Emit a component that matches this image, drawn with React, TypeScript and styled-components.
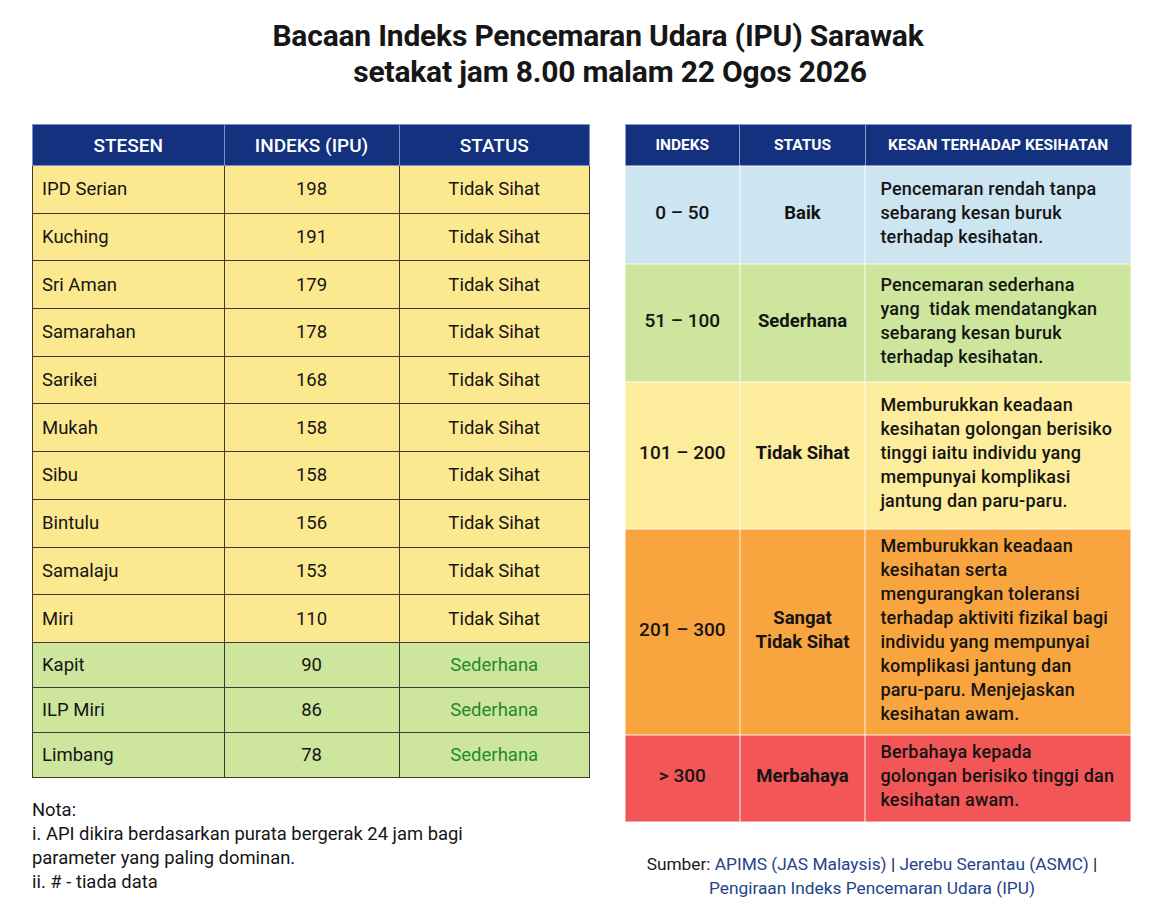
import styled, { createGlobalStyle } from "styled-components";

interface StationRow {
  name: string;
  value: number;
  status: string;
}

interface BandRow {
  range: string;
  status: string[];
  desc: string[];
  color: string;
  height: number;
}

const stations: StationRow[] = [
  { name: "IPD Serian", value: 198, status: "Tidak Sihat" },
  { name: "Kuching", value: 191, status: "Tidak Sihat" },
  { name: "Sri Aman", value: 179, status: "Tidak Sihat" },
  { name: "Samarahan", value: 178, status: "Tidak Sihat" },
  { name: "Sarikei", value: 168, status: "Tidak Sihat" },
  { name: "Mukah", value: 158, status: "Tidak Sihat" },
  { name: "Sibu", value: 158, status: "Tidak Sihat" },
  { name: "Bintulu", value: 156, status: "Tidak Sihat" },
  { name: "Samalaju", value: 153, status: "Tidak Sihat" },
  { name: "Miri", value: 110, status: "Tidak Sihat" },
  { name: "Kapit", value: 90, status: "Sederhana" },
  { name: "ILP Miri", value: 86, status: "Sederhana" },
  { name: "Limbang", value: 78, status: "Sederhana" },
];

const bands: BandRow[] = [
  {
    range: "0 – 50",
    status: ["Baik"],
    desc: ["Pencemaran rendah tanpa", "sebarang kesan buruk", "terhadap kesihatan."],
    color: "#cde4f1",
    height: 98,
  },
  {
    range: "51 – 100",
    status: ["Sederhana"],
    desc: [
      "Pencemaran sederhana",
      "yang  tidak mendatangkan",
      "sebarang kesan buruk",
      "terhadap kesihatan.",
    ],
    color: "#cde59c",
    height: 118,
  },
  {
    range: "101 – 200",
    status: ["Tidak Sihat"],
    desc: [
      "Memburukkan keadaan",
      "kesihatan golongan berisiko",
      "tinggi iaitu individu yang",
      "mempunyai komplikasi",
      "jantung dan paru-paru.",
    ],
    color: "#fcec9b",
    height: 147,
  },
  {
    range: "201 – 300",
    status: ["Sangat", "Tidak Sihat"],
    desc: [
      "Memburukkan keadaan",
      "kesihatan serta",
      "mengurangkan toleransi",
      "terhadap aktiviti fizikal bagi",
      "individu yang mempunyai",
      "komplikasi jantung dan",
      "paru-paru. Menjejaskan",
      "kesihatan awam.",
    ],
    color: "#f8a53f",
    height: 206,
  },
  {
    range: "> 300",
    status: ["Merbahaya"],
    desc: ["Berbahaya kepada", "golongan berisiko tinggi dan", "kesihatan awam."],
    color: "#f35656",
    height: 87,
  },
];

const GlobalStyle = createGlobalStyle`
  body {
    margin: 0;
    background: #ffffff;
    font-family: Roboto, "Liberation Sans", sans-serif;
    color: #111111;
  }
`;

const Page = styled.div`
  width: 1150px;
  height: 912px;
  overflow: hidden;
`;

const Title = styled.h1`
  margin: 18px 0 0;
  padding-left: 46px;
  text-align: center;
  font-size: 30px;
  line-height: 36px;
  font-weight: 700;
  letter-spacing: -0.2px;
  color: #161616;
`;

const SubTitle = styled.span`
  display: block;
  padding-left: 24px;
`;

const Content = styled.div`
  display: flex;
  align-items: flex-start;
  gap: 34px;
  padding-left: 32px;
  margin-top: 34px;
`;

const Column = styled.div<{ $width: number }>`
  display: flex;
  flex-direction: column;
  width: ${(p) => p.$width}px;
`;

const StationTable = styled.table`
  width: 100%;
  border-collapse: collapse;
  table-layout: fixed;
  border: 1.5px solid #3c3c2c;
`;

const HeadCell = styled.th<{ $width: string; $size?: number }>`
  width: ${(p) => p.$width};
  height: 40px;
  padding: 0;
  background: #13317e;
  color: #ffffff;
  font-size: ${(p) => p.$size ?? 19}px;
  font-weight: 500;
  text-align: center;
  border: 1px solid #7d8fc4;
`;

const StationRowEl = styled.tr<{ $bg: string; $height: number }>`
  background: ${(p) => p.$bg};
  height: ${(p) => p.$height}px;
`;

const StationCell = styled.td<{ $align?: string; $color?: string }>`
  padding: 0 9px;
  font-size: 18.5px;
  text-align: ${(p) => p.$align ?? "center"};
  color: ${(p) => p.$color ?? "#151515"};
  border: 1.5px solid #3c3c2c;
`;

const Notes = styled.div`
  margin-top: 20px;
  font-size: 18.4px;
  line-height: 24px;
  color: #151515;
`;

const BandTable = styled.table`
  width: 100%;
  border-collapse: collapse;
  table-layout: fixed;
  border: 1.5px solid #3a3a3a;
`;

const BandHead = styled(HeadCell)`
  font-weight: 700;
  border-color: #8a9bd0;
`;

const BandRowEl = styled.tr<{ $bg: string; $height: number }>`
  background: ${(p) => p.$bg};
  height: ${(p) => p.$height}px;
`;

const BandCell = styled.td<{ $bold?: boolean }>`
  padding: 0 0 5px;
  text-align: center;
  font-size: ${(p) => (p.$bold ? 18.5 : 19)}px;
  line-height: 24px;
  font-weight: ${(p) => (p.$bold ? 700 : 500)};
  color: #141414;
  border: 2px solid rgba(255, 255, 255, 0.45);
`;

const DescCell = styled.td`
  padding: 0 2px 5px 14px;
  font-size: 18px;
  line-height: 24px;
  font-weight: 500;
  letter-spacing: 0.2px;
  color: #141414;
  border: 2px solid rgba(255, 255, 255, 0.45);
`;

const Line = styled.div`
  white-space: pre;
`;

const Sources = styled.div`
  margin-top: 29px;
  padding-right: 12px;
  text-align: center;
  font-size: 17.3px;
  line-height: 24px;
  color: #1a1a1a;
`;

const Link = styled.span`
  color: #24448a;
`;

export default function App() {
  return (
    <Page>
      <GlobalStyle />
      <Title>
        Bacaan Indeks Pencemaran Udara (IPU) Sarawak
        <SubTitle>setakat jam 8.00 malam 22 Ogos 2026</SubTitle>
      </Title>
      <Content>
        <Column $width={558}>
          <StationTable>
            <thead>
              <tr>
                <HeadCell $width="34.4%">STESEN</HeadCell>
                <HeadCell $width="31.4%">INDEKS (IPU)</HeadCell>
                <HeadCell $width="34.2%">STATUS</HeadCell>
              </tr>
            </thead>
            <tbody>
              {stations.map((s) => {
                const moderate = s.value <= 100;
                return (
                  <StationRowEl
                    key={s.name}
                    $bg={moderate ? "#cde59c" : "#fce98f"}
                    $height={moderate ? 45 : 47.7}
                  >
                    <StationCell $align="left">{s.name}</StationCell>
                    <StationCell>{s.value}</StationCell>
                    <StationCell $color={moderate ? "#1f8a2e" : undefined}>
                      {s.status}
                    </StationCell>
                  </StationRowEl>
                );
              })}
            </tbody>
          </StationTable>
          <Notes>
            Nota:
            <br />
            i. API dikira berdasarkan purata bergerak 24 jam bagi
            <br />
            parameter yang paling dominan.
            <br />
            ii. # - tiada data
          </Notes>
        </Column>
        <Column $width={508}>
          <BandTable>
            <thead>
              <tr>
                <BandHead $width="22.6%" $size={15.5}>
                  INDEKS
                </BandHead>
                <BandHead $width="24.8%" $size={15.5}>
                  STATUS
                </BandHead>
                <BandHead $width="52.6%" $size={15.5}>
                  KESAN TERHADAP KESIHATAN
                </BandHead>
              </tr>
            </thead>
            <tbody>
              {bands.map((b) => (
                <BandRowEl key={b.range} $bg={b.color} $height={b.height}>
                  <BandCell>{b.range}</BandCell>
                  <BandCell $bold>
                    {b.status.map((t) => (
                      <Line key={t}>{t}</Line>
                    ))}
                  </BandCell>
                  <DescCell>
                    {b.desc.map((t) => (
                      <Line key={t}>{t}</Line>
                    ))}
                  </DescCell>
                </BandRowEl>
              ))}
            </tbody>
          </BandTable>
          <Sources>
            Sumber: <Link>APIMS (JAS Malaysis)</Link> | <Link>Jerebu Serantau (ASMC)</Link> |
            <br />
            <Link>Pengiraan Indeks Pencemaran Udara (IPU)</Link>
          </Sources>
        </Column>
      </Content>
    </Page>
  );
}
